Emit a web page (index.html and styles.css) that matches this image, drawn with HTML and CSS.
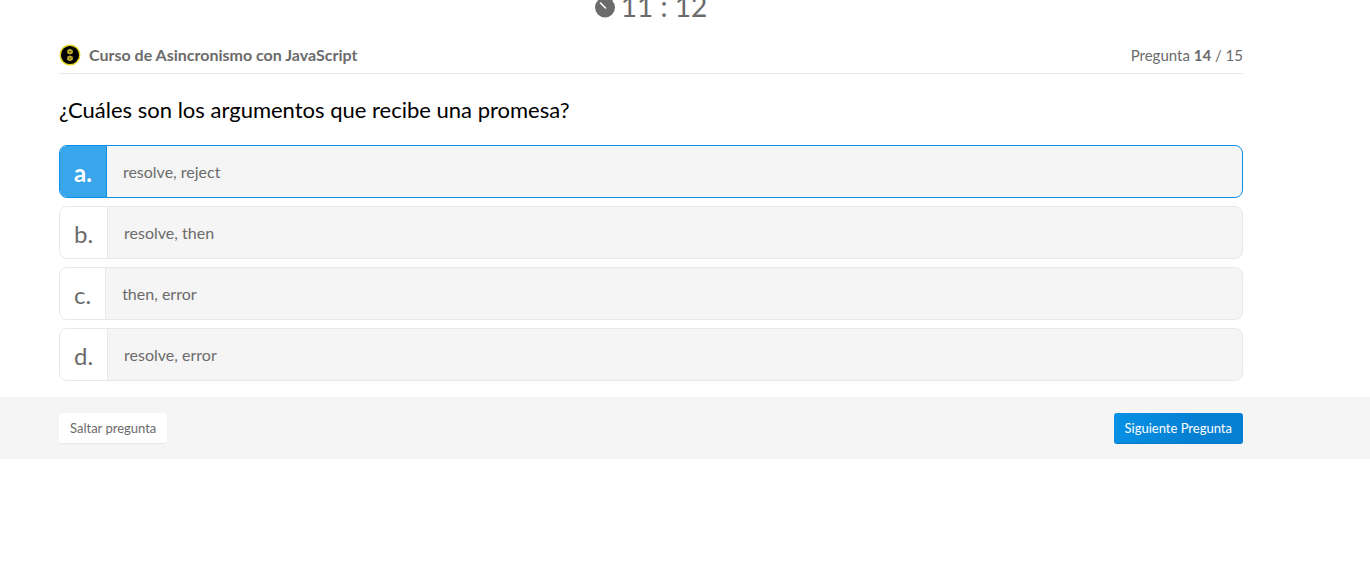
FILE: index.html
```html
<!DOCTYPE html>
<html lang="es">
<head>
<meta charset="utf-8">
<meta name="viewport" content="width=device-width, initial-scale=1">
<title>Examen</title>
<link rel="stylesheet" href="styles.css">
</head>
<body>
<form class="exam">
  <div class="timer">
    <svg class="timer-icon" viewBox="0 0 20 24" aria-hidden="true">
      <path d="M7 0h6v3H7z" fill="currentColor"/>
      <path d="M16 4l2 2" stroke="currentColor" stroke-width="3"/>
      <circle cx="10" cy="13.5" r="10" fill="currentColor"/>
      <path d="M5.500 9l5 5" stroke="#fff" stroke-width="1.600" stroke-linecap="round"/>
    </svg>
    <span>11 : 12</span>
  </div>
  <header class="exam-header">
    <div class="course">
      <svg class="course-badge" viewBox="0 0 22 22" aria-hidden="true">
        <circle cx="11" cy="11" r="9.800" fill="#000" stroke="#e0d321" stroke-width="1.400"/>
        <path d="M11 4.800l2.800 1.400v3L11 10.600 8.200 9.200v-3zM11 11.400l2.800 1.400v3L11 17.200l-2.800-1.400v-3z" fill="#c9b52a"/>
        <path d="M9.500 7l1.500.8L12.500 7M11 7.800v1.500M9.500 13.600l1.500.8 1.500-.8M11 14.400v1.500" fill="none" stroke="#4a4210" stroke-width=".7"/>
      </svg>
      <h1 class="course-name">Curso de Asincronismo con JavaScript</h1>
    </div>
    <p class="progress">Pregunta <strong>14</strong> / 15</p>
  </header>
  <fieldset class="question">
    <legend class="question-title">¿Cuáles son los argumentos que recibe una promesa?</legend>
    <div class="options">
      <label class="option"><input class="option-input" type="radio" name="answer" value="a" checked><span class="option-letter">a.</span><span class="option-text">resolve, reject</span></label>
      <label class="option"><input class="option-input" type="radio" name="answer" value="b"><span class="option-letter">b.</span><span class="option-text">resolve, then</span></label>
      <label class="option"><input class="option-input" type="radio" name="answer" value="c"><span class="option-letter">c.</span><span class="option-text">then, error</span></label>
      <label class="option"><input class="option-input" type="radio" name="answer" value="d"><span class="option-letter">d.</span><span class="option-text">resolve, error</span></label>
    </div>
  </fieldset>
  <footer class="exam-footer">
    <button class="button" type="button">Saltar pregunta</button>
    <button class="button button-primary" type="button">Siguiente Pregunta</button>
  </footer>
</form>
</body>
</html>
```

FILE: styles.css
```css
* {
  box-sizing: border-box;
}

body {
  margin: 0;
  background: #fff;
  color: #6b6b6b;
  font-family: Lato, sans-serif;
  font-size: 16px;
  line-height: 24px;
}

.timer,
.exam-header,
.question {
  margin-left: 59px;
  margin-right: 127px;
}

.timer {
  display: flex;
  justify-content: center;
  align-items: center;
  gap: 6px;
  margin-top: -14px;
  font-size: 28px;
  line-height: 40px;
}

.timer-icon {
  width: 20px;
  height: 24px;
}

.exam-header {
  display: flex;
  justify-content: space-between;
  align-items: center;
  margin-top: 17px;
  padding-bottom: 6px;
  border-bottom: 1px solid #e8e8e8;
}

.course {
  display: flex;
  align-items: center;
  gap: 8px;
}

.course-badge {
  width: 22px;
  height: 22px;
}

.course-name {
  margin: 0;
  font-size: 16px;
  font-weight: 700;
  line-height: 24px;
}

.progress {
  margin: 0;
  font-size: 15px;
}

.question {
  margin-top: 20px;
  padding: 0;
  border: 0;
}

.question-title {
  padding: 0;
  color: #000;
  font-size: 22px;
  line-height: 32px;
}

.options {
  display: flex;
  flex-direction: column;
  gap: 8px;
  padding-top: 19px;
}

.option {
  position: relative;
  display: flex;
  align-items: stretch;
  min-height: 53px;
  overflow: hidden;
  border: 1px solid #e8e8e8;
  border-radius: 8px;
  background: #f5f5f5;
  cursor: pointer;
}

.option-input {
  position: absolute;
  opacity: 0;
}

.option-letter {
  display: flex;
  align-items: center;
  padding: 2px 14px 0;
  border-right: 1px solid #e8e8e8;
  background: #fff;
  font-size: 24px;
}

.option-text {
  display: flex;
  align-items: center;
  padding: 0 16px;
}

.option:has(:checked) {
  border-color: #0791e6;
}

.option-input:checked + .option-letter {
  border-color: #0791e6;
  background: #39a5ea;
  color: #fff;
  font-weight: 700;
}

.exam-footer {
  display: flex;
  justify-content: space-between;
  margin-top: 16px;
  padding: 16px 127px 15px 59px;
  background: #f5f5f5;
}

.button {
  height: 31px;
  padding: 0 11px;
  border: 0;
  border-bottom: 1px solid #e8e8e8;
  border-radius: 3px;
  background: #fff;
  color: #6b6b6b;
  font-family: inherit;
  font-size: 13px;
  line-height: 30px;
  cursor: pointer;
}

.button-primary {
  border-color: #0479c5;
  background: linear-gradient(105deg, #0791e6, #0580d3 60%);
  color: #fff;
}
```
